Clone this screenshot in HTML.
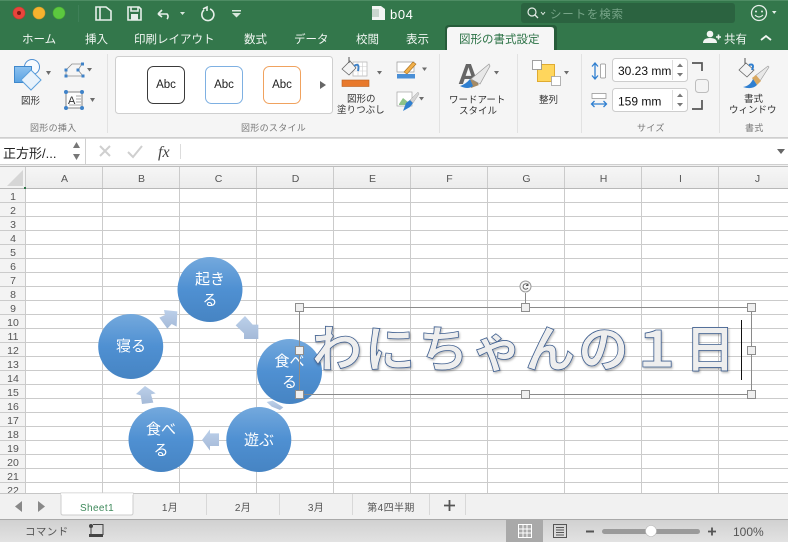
<!DOCTYPE html>
<html lang="ja"><head><meta charset="utf-8"><style>
html,body{margin:0;padding:0;background:#fff}
svg{display:block}
text{font-family:"Liberation Sans","Noto Sans CJK JP",sans-serif}
</style></head><body>
<svg width="788" height="542" viewBox="0 0 788 542" xmlns="http://www.w3.org/2000/svg">
<defs>
<linearGradient id="c" x1="0" y1="0" x2="0" y2="1"><stop offset="0" stop-color="#74a9dd"/><stop offset=".5" stop-color="#4f90d2"/><stop offset="1" stop-color="#4684c3"/></linearGradient>
<linearGradient id="a" x1="0" y1="0" x2="0" y2="1"><stop offset="0" stop-color="#bcd0ea"/><stop offset="1" stop-color="#a5bad8"/></linearGradient>
<linearGradient id="st" x1="0" y1="0" x2="0" y2="1"><stop offset="0" stop-color="#d0d0d0"/><stop offset="1" stop-color="#e2e2e2"/></linearGradient>
<linearGradient id="hd" x1="0" y1="0" x2="0" y2="1"><stop offset="0" stop-color="#f6f6f6"/><stop offset="1" stop-color="#ececec"/></linearGradient>
<linearGradient id="sq" x1="0" y1="0" x2="0" y2="1"><stop offset="0" stop-color="#8cc2f0"/><stop offset="1" stop-color="#5ba3e2"/></linearGradient>
<filter id="sh" x="-5%" y="-10%" width="110%" height="125%"><feDropShadow dx="1" dy="1.500" stdDeviation="1" flood-color="#000" flood-opacity=".28"/></filter>
</defs>

<!-- title + tab bar -->
<rect width="788" height="50" fill="#33774b"/>
<rect x="0" y="0" width="788" height="1" fill="#4d8c63"/>
<circle cx="19" cy="13" r="6" fill="#e8453c" stroke="#c9382f" stroke-width=".6"/><circle cx="19" cy="13" r="2" fill="#7c1a14"/>
<circle cx="39" cy="13" r="6" fill="#f5b32e" stroke="#d9992a" stroke-width=".6"/>
<circle cx="59" cy="13" r="6" fill="#5cc83f" stroke="#4aa833" stroke-width=".6"/>
<rect x="78" y="5" width="1" height="17" fill="#3f8058"/>
<g fill="none" stroke="#e6efe9" stroke-width="1.600">
<path d="M96 7H106L111 11V20H96Z"/><path d="M100 7V20"/>
<path d="M128 7H139L141 9V20H128Z"/><path d="M131 7V11H138V7"/>
<path d="M158 14L162 10M158 14L162 17M158 14H167A3.500 3.500 0 0 1 167 19"/>
<path d="M203 9L207 7V11M204 10A6 6 0 1 0 210 9"/>
</g>
<rect x="131" y="14" width="7" height="6" fill="#e6efe9"/>
<path d="M180 12H185L182.500 15Z" fill="#d8e6dc"/>
<path d="M232 10H241V11.500H232ZM232 13H241L236.500 17.500Z" fill="#d8e6dc"/>
<path d="M372 6H381L385 9V20H372Z" fill="#f2f5f3"/><rect x="372" y="9" width="7" height="8" fill="#c9d6ce"/>
<text x="390" y="19" font-size="13" fill="#fff" letter-spacing=".6">b04</text>
<rect x="521" y="3" width="214" height="20" rx="3" fill="#2b6340"/>
<circle cx="532" cy="12" r="4" fill="none" stroke="#e4ece6" stroke-width="1.200"/><path d="M535 15L538 18" stroke="#e4ece6" stroke-width="1.300"/><path d="M541 12L543 14.500L545 12" fill="none" stroke="#e4ece6" stroke-width="1"/>
<text x="550" y="18" font-size="11.500" fill="#76a487" letter-spacing=".8">シートを検索</text>
<circle cx="759" cy="13" r="7.500" fill="none" stroke="#e6efe9" stroke-width="1.300"/><circle cx="756" cy="11.500" r="1" fill="#e6efe9"/><circle cx="762" cy="11.500" r="1" fill="#e6efe9"/><path d="M755 15Q759 19 763 15" fill="none" stroke="#e6efe9" stroke-width="1.100"/>
<path d="M772 11H776.500L774.200 14Z" fill="#e6efe9"/>

<g font-size="11.500" fill="#f1f6f2">
<text x="22" y="43">ホーム</text><text x="85" y="43">挿入</text><text x="134" y="43">印刷レイアウト</text><text x="244" y="43">数式</text><text x="294" y="43">データ</text><text x="356" y="43">校閲</text><text x="406" y="43">表示</text>
<text x="724" y="43">共有</text>
</g>
<path d="M445 50V29Q445 25 449 25H553Q557 25 557 29V50Z" fill="#265c3a"/>
<path d="M447 50V30Q447 27 450 27H551Q554 27 554 30V50Z" fill="#f6f6f6"/>
<text x="459" y="43" font-size="11.500" fill="#2d7347">図形の書式設定</text>
<circle cx="710" cy="34" r="3.300" fill="#f1f6f2"/><path d="M703 43Q703 38 710 38Q717 38 717 43Z" fill="#f1f6f2"/><path d="M716 37H721M718.500 34.500V39.500" stroke="#f1f6f2" stroke-width="1.600"/>
<path d="M761 40L766 36L771 40" fill="none" stroke="#f1f6f2" stroke-width="1.800"/>

<!-- ribbon -->
<rect y="50" width="788" height="87" fill="#f5f5f5"/>
<rect y="137" width="788" height="1" fill="#cfcfcf"/>
<g fill="#e2e2e2"><rect x="107" y="54" width="1" height="79"/><rect x="439" y="54" width="1" height="79"/><rect x="517" y="54" width="1" height="79"/><rect x="581" y="54" width="1" height="79"/><rect x="719" y="54" width="1" height="79"/></g>

<!-- shape icon -->
<circle cx="32" cy="67" r="7.500" fill="#f8fbfe" stroke="#4f90d2" stroke-width="1"/>
<rect x="14.500" y="66.500" width="17" height="16" fill="url(#sq)" stroke="#3f88cc"/>
<path d="M31 70L41 80L31 90L21 80Z" fill="#e8f2fb" stroke="#5a9fdc"/>
<path d="M46 71H51L48.500 75Z" fill="#6c6c6c"/>
<text x="21" y="104" font-size="9.500" fill="#333">図形</text>
<!-- edit points -->
<path d="M66 76V70L72 64H82L78 70L83 76Z" fill="none" stroke="#8a8a8a" stroke-width=".8"/>
<g fill="#3f82c8"><rect x="64.500" y="74.500" width="3" height="3"/><rect x="64.500" y="68.500" width="3" height="3"/><rect x="81" y="62.500" width="3" height="3"/><rect x="76.500" y="68.500" width="3" height="3"/><rect x="81.500" y="74.500" width="3" height="3"/></g>
<path d="M87 68H92L89.500 71.500Z" fill="#6c6c6c"/>
<!-- text box -->
<rect x="66" y="92" width="16" height="16" fill="#fdfdfd" stroke="#666" stroke-width=".8"/>
<text x="68" y="104" font-size="11" fill="#333">A</text>
<path d="M76 96H81M76 99H81M76 102H81M69 105H81" stroke="#8a8a8a" stroke-width=".8"/>
<g fill="#3f82c8"><circle cx="66" cy="92" r="2"/><circle cx="82" cy="92" r="2"/><circle cx="66" cy="108" r="2"/><circle cx="82" cy="108" r="2"/></g>
<path d="M90 98H95L92.500 102Z" fill="#6c6c6c"/>
<text x="30" y="131" font-size="9" fill="#777" letter-spacing=".3">図形の挿入</text>

<!-- gallery -->
<rect x="115.500" y="56.500" width="217" height="57" rx="3" fill="#fff" stroke="#cfcfcf"/>
<rect x="147.500" y="66.500" width="37" height="37" rx="6" fill="#fff" stroke="#3a3a3a"/>
<rect x="205.500" y="66.500" width="37" height="37" rx="6" fill="#fff" stroke="#7eb0e2"/>
<rect x="263.500" y="66.500" width="37" height="37" rx="6" fill="#fff" stroke="#f0a25e"/>
<g font-size="11.500" fill="#222" text-anchor="middle"><text x="166" y="88">Abc</text><text x="224" y="88">Abc</text><text x="282" y="88">Abc</text></g>
<path d="M320 81L326 85L320 89Z" fill="#666"/>
<text x="241" y="131" font-size="9" fill="#777" letter-spacing=".3">図形のスタイル</text>

<!-- fill -->
<path d="M353 62H367V76H353Z" fill="#fff" stroke="#b5b5b5" stroke-width=".7"/><path d="M353 66.500H367M353 71H367M358 62V76M362.500 62V76" stroke="#cdcdcd" stroke-width=".6"/>
<path d="M342 69L350 61L356 68L349 75Z" fill="#f3f3f3" stroke="#666" stroke-width=".8"/><path d="M349 57V63" stroke="#555" stroke-width="1"/><path d="M354 66Q360 62 358 71" fill="none" stroke="#3f82c8" stroke-width="2"/>
<rect x="342" y="80" width="27" height="6.500" fill="#e8792c" stroke="#b8601f" stroke-width=".6"/>
<path d="M377 71H382L379.500 74.500Z" fill="#6c6c6c"/>
<g font-size="9.500" fill="#333"><text x="347" y="102">図形の</text><text x="337" y="113">塗りつぶし</text></g>
<!-- outline -->
<path d="M397 62H414V72H397Z" fill="#fff" stroke="#9a9a9a" stroke-width=".7"/>
<path d="M404 72L413 62L416 64L407 74Z" fill="#f2b04a" stroke="#a76f20" stroke-width=".6"/>
<rect x="397" y="74" width="18" height="4.500" fill="#4a8fd6"/>
<path d="M422 67.500H427L424.500 71Z" fill="#6c6c6c"/>
<!-- effect -->
<rect x="397" y="92" width="15" height="14" fill="#fff" stroke="#a5a5a5" stroke-width=".7"/><path d="M399 104L403 98L408 102L411 99V105H399Z" fill="#8ec38a"/>
<path d="M403 111L406 103L410 100L413 103L410 107Z" fill="#2f7fd0"/><path d="M410 100L418 92L419 94L413 103Z" fill="#d4d4d4" stroke="#999" stroke-width=".4"/>
<path d="M419 97H424L421.500 100.500Z" fill="#6c6c6c"/>

<!-- wordart icon -->
<text x="458" y="84" font-size="29" font-weight="bold" fill="#666">A</text>
<path d="M471 79L489 64L490 66L480 84Z" fill="#e8e8e8" stroke="#999" stroke-width=".7"/>
<path d="M470 79L476 82L479 85L471 88Z" fill="#a58a64"/>
<path d="M460 86Q466 84 470 79L473 86Q468 90 460 86Z" fill="#2f7fd0"/>
<path d="M494 71H499L496.500 74.500Z" fill="#6c6c6c"/>
<g font-size="9.500" fill="#333"><text x="449" y="103">ワードアート</text><text x="459" y="114">スタイル</text></g>

<!-- arrange -->
<rect x="537.500" y="64.500" width="17" height="17" fill="#ffd65c" stroke="#e0ab30"/>
<rect x="532.500" y="60.500" width="9" height="9" fill="#fff" stroke="#8a8a8a" stroke-width=".8"/>
<rect x="551.500" y="76.500" width="9" height="9" fill="#fff" stroke="#a0a0a0" stroke-width=".8"/>
<path d="M564 71H569L566.500 74.500Z" fill="#6c6c6c"/>
<text x="539" y="103" font-size="9.500" fill="#333">整列</text>

<!-- size -->
<path d="M595 64V78M592 66.500L595 63L598 66.500M592 75.500L595 79L598 75.500" fill="none" stroke="#2f7fd0" stroke-width="1.300"/>
<rect x="600.500" y="64" width="5" height="14" rx="1" fill="#fff" stroke="#8a8a8a" stroke-width=".7"/>
<rect x="592" y="93.500" width="14" height="5" fill="#fff" stroke="#8a8a8a" stroke-width=".7"/>
<path d="M592 104H606M594.500 101L591.500 104L594.500 107M603.500 101L606.500 104L603.500 107" fill="none" stroke="#2f7fd0" stroke-width="1.300"/>
<rect x="612.500" y="58.500" width="75" height="23" rx="3" fill="#fff" stroke="#cdcdcd"/>
<rect x="612.500" y="88.500" width="75" height="23" rx="3" fill="#fff" stroke="#cdcdcd"/>
<path d="M672.500 60V80M672.500 90V110" stroke="#dedede"/>
<svg x="612" y="58" width="59" height="24"><text x="6" y="17" font-size="12" fill="#111">30.23 mm</text></svg>
<text x="618" y="105.500" font-size="12" fill="#111">159 mm</text>
<g fill="#777"><path d="M677 67L680 63.500L683 67ZM677 73L680 76.500L683 73Z"/><path d="M677 97L680 93.500L683 97ZM677 103L680 106.500L683 103Z"/></g>
<path d="M692 63H702V71M692 109H702V100" fill="none" stroke="#555" stroke-width="1.700"/>
<rect x="695.500" y="79.500" width="13" height="13" rx="3" fill="#f3f3f3" stroke="#bdbdbd"/>
<text x="637" y="131" font-size="9" fill="#777" letter-spacing=".3">サイズ</text>

<!-- format pane -->
<path d="M739 70L746 63L754 70L747 77Z" fill="#f3f3f3" stroke="#666" stroke-width=".8"/><path d="M745 58V64" stroke="#555"/><path d="M749 65Q755 63 752 70" fill="none" stroke="#2f7fd0" stroke-width="2"/>
<path d="M755 76L768 66L769 67L760 81Z" fill="#e8e8e8" stroke="#999" stroke-width=".6"/>
<path d="M752 78L756 75L761 81L757 85Z" fill="#d9a860"/>
<path d="M743 87Q750 86 753 79L757 85Q752 90 743 87Z" fill="#2f7fd0"/>
<g font-size="9.500" fill="#333"><text x="744" y="102">書式</text><text x="729" y="113">ウィンドウ</text></g>
<text x="745" y="131" font-size="9" fill="#777" letter-spacing=".3">書式</text>

<!-- formula bar -->
<rect y="138" width="788" height="27" fill="#fff"/>
<rect y="138" width="788" height="1" fill="#dcdcdc"/>
<rect x="85" y="138" width="1" height="26" fill="#d0d0d0"/>
<rect y="164" width="788" height="1" fill="#cfcfcf"/><rect y="165" width="788" height="2" fill="#f0f0f0"/>
<rect y="166" width="788" height="1" fill="#bdbdbd"/>
<text x="3" y="158" font-size="13" fill="#222">正方形/...</text>
<path d="M73 148L76.500 142L80 148ZM73 154L76.500 160L80 154Z" fill="#777"/>
<path d="M100 146L110 156M110 146L100 156" stroke="#cfcfcf" stroke-width="2"/>
<path d="M128 152L133 157L142 146" fill="none" stroke="#cfcfcf" stroke-width="2"/>
<text x="158" y="157" font-size="16" font-style="italic" fill="#444" style="font-family:'Liberation Serif',serif">fx</text>
<rect x="180" y="144" width="1" height="15" fill="#dcdcdc"/>
<path d="M777 149H785L781 154Z" fill="#666"/>

<!-- sheet headers -->
<rect y="167" width="788" height="21" fill="url(#hd)"/>
<rect y="167" width="25" height="326" fill="#f3f3f3"/>
<path d="M23 170V186H7Z" fill="#d6d6d6"/>
<rect x="25" y="188" width="763" height="305" fill="#fff"/>
<path d="M25.500 167V493M102.500 167V493M179.500 167V493M256.500 167V493M333.500 167V493M410.500 167V493M487.500 167V493M564.500 167V493M641.500 167V493M718.500 167V493" stroke="#cbcbcb"/>
<path d="M0 202.500H788M0 216.500H788M0 230.500H788M0 244.500H788M0 258.500H788M0 272.500H788M0 286.500H788M0 300.500H788M0 314.500H788M0 328.500H788M0 342.500H788M0 356.500H788M0 370.500H788M0 384.500H788M0 398.500H788M0 412.500H788M0 426.500H788M0 440.500H788M0 454.500H788M0 468.500H788M0 482.500H788" stroke="#cbcbcb"/>
<path d="M0 188.500H788" stroke="#b8b8b8"/>
<rect x="24" y="187" width="2" height="2" fill="#2d7347"/>
<g font-size="10.500" fill="#555" text-anchor="middle">
<text x="64.500" y="182">A</text><text x="141.500" y="182">B</text><text x="218.500" y="182">C</text><text x="295.500" y="182">D</text><text x="372.500" y="182">E</text><text x="449.500" y="182">F</text><text x="526.500" y="182">G</text><text x="603.500" y="182">H</text><text x="680.500" y="182">I</text><text x="757.500" y="182">J</text>
<text x="13" y="200">1</text><text x="13" y="214">2</text><text x="13" y="228">3</text><text x="13" y="242">4</text><text x="13" y="256">5</text><text x="13" y="270">6</text><text x="13" y="284">7</text><text x="13" y="298">8</text><text x="13" y="312">9</text><text x="13" y="326">10</text><text x="13" y="340">11</text><text x="13" y="354">12</text><text x="13" y="368">13</text><text x="13" y="382">14</text><text x="13" y="396">15</text><text x="13" y="410">16</text><text x="13" y="424">17</text><text x="13" y="438">18</text><text x="13" y="452">19</text><text x="13" y="466">20</text><text x="13" y="480">21</text><text x="13" y="494">22</text>
</g>

<!-- smartart -->
<g transform="translate(90 250) scale(.33333)" fill="url(#a)">
<path d="M437 226L465 198L488 224L505 224V267H462V250Z"/>
<path d="M530 456L548 452L580 472L570 480L545 470Z"/>
<path d="M336 570L360 538V550H387V588H360V602Z"/>
<path d="M138 432L165 408L197 430L183 433L190 458L156 462L152 436Z"/>
<path d="M208 203L225 195L222 180L262 184L260 230L245 222L232 236Z"/>
</g>
<circle cx="210" cy="289.500" r="32.500" fill="url(#c)"/>
<circle cx="130.700" cy="346.500" r="32.500" fill="url(#c)"/>
<circle cx="289.500" cy="371.500" r="32.500" fill="url(#c)"/>
<circle cx="258.800" cy="439.500" r="32.500" fill="url(#c)"/>
<circle cx="161" cy="439.500" r="32.500" fill="url(#c)"/>
<g font-size="15" fill="#fff" text-anchor="middle">
<text x="210" y="284">起き</text><text x="210" y="305">る</text>
<text x="131" y="351">寝る</text>
<text x="289.500" y="366">食べ</text><text x="289.500" y="387">る</text>
<text x="259" y="445">遊ぶ</text>
<text x="161" y="434">食べ</text><text x="161" y="455">る</text>
</g>

<!-- wordart text -->
<text x="312" y="367" font-size="50" font-weight="bold" fill="#eeeeee" stroke="#3f5f8f" stroke-width=".8" textLength="423" lengthAdjust="spacing" filter="url(#sh)" style="font-family:'Noto Sans CJK JP',sans-serif">わにちゃんの１日</text>
<rect x="741" y="320" width="1" height="60" fill="#111"/>

<!-- selection -->
<rect x="299.500" y="307.500" width="452" height="87" fill="none" stroke="#8a8a8a"/>
<path d="M525.500 293V307" stroke="#8a8a8a"/>
<circle cx="525.500" cy="286.500" r="5.500" fill="#f6f6f6" stroke="#9a9a9a"/><path d="M528 285A2.700 2.700 0 1 0 528 288M528 283.500V285.500H526" fill="none" stroke="#555" stroke-width=".9"/>
<g fill="#efefef" stroke="#8e8e8e">
<rect x="295.500" y="303.500" width="8" height="8"/><rect x="521.500" y="303.500" width="8" height="8"/><rect x="747.500" y="303.500" width="8" height="8"/>
<rect x="747.500" y="346.500" width="8" height="8"/>
<rect x="295.500" y="346.500" width="8" height="8"/>
<rect x="295.500" y="390.500" width="8" height="8"/><rect x="521.500" y="390.500" width="8" height="8"/><rect x="747.500" y="390.500" width="8" height="8"/>
</g>

<!-- tab bar -->
<rect y="493" width="788" height="26" fill="#f1f1f1"/>
<rect y="493" width="788" height="1" fill="#c6c6c6"/>
<path d="M61 493V513Q61 515 63 515H131Q133 515 133 513V493Z" fill="#fff" stroke="#cdcdcd"/>
<path d="M61 494H133" stroke="#fff" stroke-width="1.500"/>
<path d="M22 501V512L15 506.500Z" fill="#888"/><path d="M38 501V512L45 506.500Z" fill="#888"/>
<path d="M206.500 494V515M279.500 494V515M352.500 494V515M429.500 494V515M465.500 494V515" stroke="#d8d8d8"/>
<g font-size="10" text-anchor="middle" fill="#555" letter-spacing=".4">
<text x="97" y="511" fill="#3f8a5c">Sheet1</text><text x="170" y="511">1月</text><text x="243" y="511">2月</text><text x="316" y="511">3月</text><text x="391" y="511">第4四半期</text>
</g>
<path d="M444 505.500H455M449.500 500V511" stroke="#555" stroke-width="1.800"/>

<!-- status -->
<rect y="519" width="788" height="23" fill="url(#st)"/>
<rect y="519" width="788" height="1" fill="#a9a9a9"/>
<text x="25" y="535" font-size="10.500" fill="#555" letter-spacing=".4">コマンド</text>
<circle cx="91" cy="526" r="2" fill="#444"/><path d="M91 528V535M93 524.500H103V535" fill="none" stroke="#444" stroke-width="1"/><rect x="89" y="534" width="14" height="3" fill="#444"/>
<rect x="506" y="520" width="37" height="22" fill="#a9a9a9"/>
<path d="M518.500 524.500H531.500V537.500H518.500ZM518.500 529H531.500M518.500 533H531.500M523 524.500V537.500M527 524.500V537.500" fill="none" stroke="#fff"/>
<rect x="553.500" y="524.500" width="13" height="13" fill="none" stroke="#555"/><path d="M556 527.500H564M556 530H564M556 532.500H564M556 535H564" stroke="#555" stroke-width=".9"/>
<rect x="586" y="530.500" width="8" height="2" fill="#555"/>
<rect x="602" y="529" width="98" height="5" rx="2.500" fill="#9a9a9a"/>
<circle cx="651" cy="531" r="5.500" fill="#fff" stroke="#bdbdbd" stroke-width=".6"/>
<path d="M708 531.500H716M712 527.500V535.500" stroke="#555" stroke-width="1.800"/>
<text x="733" y="536" font-size="12" fill="#555">100%</text>
</svg>
</body></html>
